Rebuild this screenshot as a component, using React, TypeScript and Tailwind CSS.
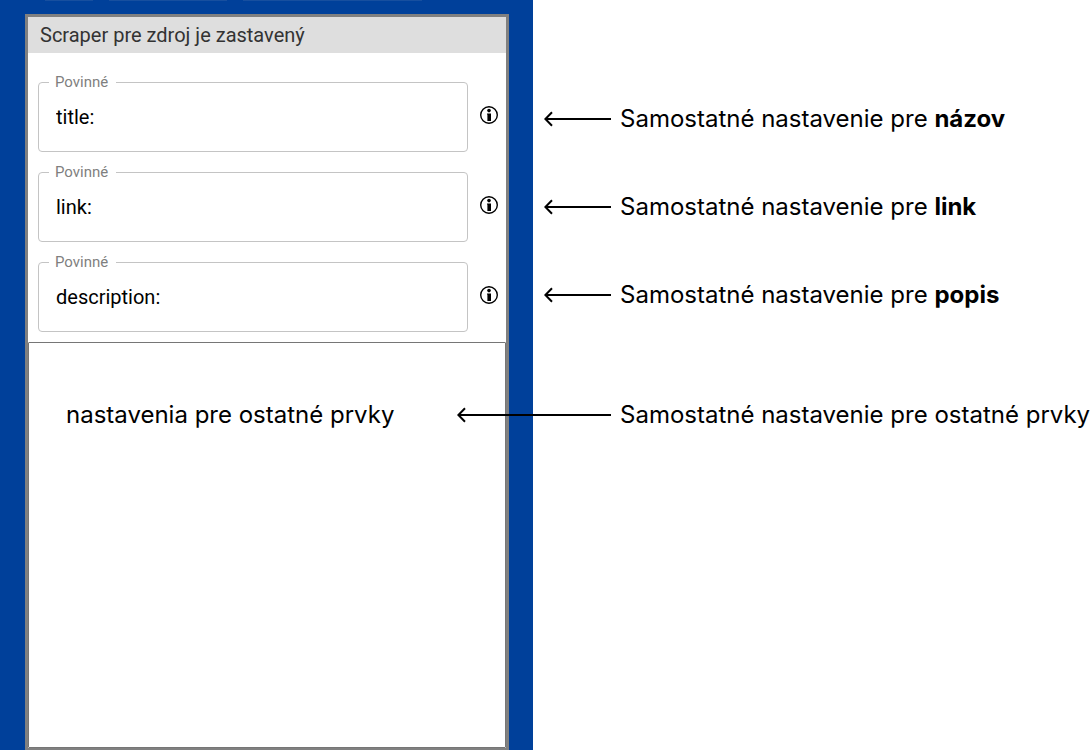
const FIELDS = [
  { id: "title", value: "title:" },
  { id: "link", value: "link:" },
  { id: "description", value: "description:" },
];

function InfoIcon() {
  return (
    <svg viewBox="0 0 18 18" className="size-[18px]" aria-hidden="true">
      <circle cx="9" cy="9" r="8.3" fill="none" stroke="#000" strokeWidth="1.4" />
      <circle cx="9" cy="4.6" r="1.8" />
      <path d="M7 7.4h4V15H7.4V8.4H7z" />
    </svg>
  );
}

function Field({ id, value }: { id: string; value: string }) {
  return (
    <div className="flex items-center gap-3">
      <fieldset className="h-[78px] min-w-0 flex-1 rounded border border-[#c4c4c4] pl-[10px]">
        <legend className="h-4 pl-[6px] pr-2 text-[15px] leading-4 text-[#7f7f7f]">
          <label htmlFor={id}>Povinné</label>
        </legend>
        <input
          id={id}
          defaultValue={value}
          className="mt-[13px] block h-7 w-full bg-transparent px-[7px] text-xl text-black outline-none"
        />
      </fieldset>
      <button type="button" aria-label="Info" className="mt-1 shrink-0">
        <InfoIcon />
      </button>
    </div>
  );
}

function ShortArrow() {
  return (
    <svg viewBox="0 0 67 16" className="h-4 w-[67px] shrink-0" fill="none" stroke="#000" strokeWidth="2" aria-hidden="true">
      <path d="M1.4 8H67M8 1.2L1.4 8L8 14.8" />
    </svg>
  );
}

function LongArrow() {
  return (
    <svg viewBox="0 0 154 16" className="absolute right-0 top-1/2 h-4 w-[154px] -translate-y-1/2" fill="none" stroke="#000" strokeWidth="2" aria-hidden="true">
      <path d="M1.4 8H154M8 1.2L1.4 8L8 14.8" />
    </svg>
  );
}

function Note({ target }: { target: string }) {
  return (
    <li className="flex h-8 items-center gap-[9px]">
      <ShortArrow />
      <span>
        Samostatné nastavenie pre <b className="font-bold">{target}</b>
      </span>
    </li>
  );
}

export default function App() {
  return (
    <div className="flex min-h-screen overflow-hidden bg-white">
      <aside className="flex w-[533px] shrink-0 flex-col bg-[#00409a] pl-[25px] pr-6 font-['Roboto',sans-serif]">
        <div className="flex h-[14px] gap-4 pl-5">
          <div className="h-px w-12 bg-[#174f9f]" />
          <div className="h-px w-[118px] bg-[#174f9f]" />
          <div className="h-px w-[179px] bg-[#174f9f]" />
        </div>
        <section className="flex flex-1 flex-col border-[3px] border-b-2 border-[#808080] bg-white">
          <h1 className="h-9 bg-[#dedede] px-3 text-xl leading-9 text-[#333]">Scraper pre zdroj je zastavený</h1>
          <div className="flex flex-col gap-3 pb-[10px] pl-[10px] pr-2 pt-[21px]">
            {FIELDS.map((f) => (
              <Field key={f.id} id={f.id} value={f.value} />
            ))}
          </div>
          <div className="flex-1 rounded-[1px] border border-[#767676] px-[37px] pt-14 font-['Inter',sans-serif] text-2xl text-black">
            nastavenia pre ostatné prvky
          </div>
        </section>
      </aside>
      <ul className="flex flex-1 flex-col gap-14 whitespace-nowrap pl-[11px] pt-[103px] font-['Inter',sans-serif] text-2xl text-black">
        <Note target="názov" />
        <Note target="link" />
        <Note target="popis" />
        <li className="mt-8 flex h-8 items-center gap-[9px]">
          <span className="relative h-8 w-[67px] shrink-0">
            <LongArrow />
          </span>
          <span>Samostatné nastavenie pre ostatné prvky</span>
        </li>
      </ul>
    </div>
  );
}
